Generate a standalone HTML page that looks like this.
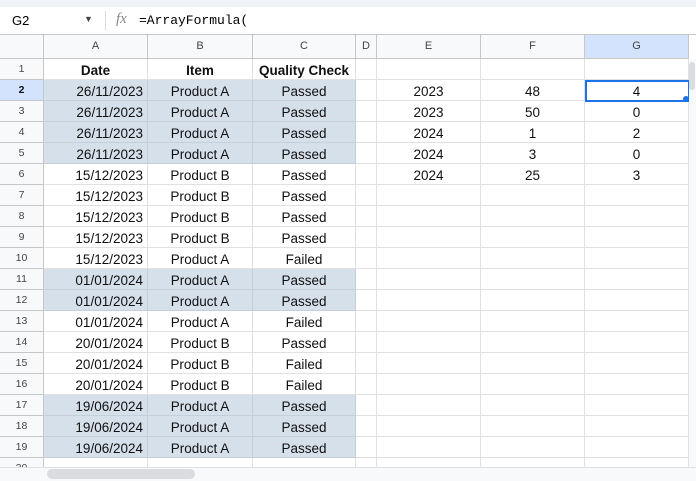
<!DOCTYPE html><html><head><style>
body{margin:0;width:696px;height:480px;overflow:hidden;background:#fff;font-family:"Liberation Sans",Arial,sans-serif;position:relative}
.top{position:absolute;left:0;top:0;width:696px;height:7px;background:#f0f4f9}
.fb{position:absolute;top:7px;left:0;width:696px;height:27px;background:#fff;border-bottom:1px solid #c7c7c7;font-size:13px}
.cell{position:absolute;box-sizing:border-box;border-right:1px solid #e1e1e1;border-bottom:1px solid #e1e1e1;font-size:13.5px;line-height:23px;color:#111;white-space:nowrap}
.hd{background:#f8f9fa;color:#444;font-size:11px;text-align:center;border-color:#c7c7c7}
</style></head><body>
<div class="top"></div>
<div class="fb"><span style="position:absolute;left:12px;top:6px">G2</span><span style="position:absolute;left:84px;top:7px;font-size:9px;color:#444">▼</span><div style="position:absolute;left:105px;top:4px;width:1px;height:19px;background:#ddd"></div><span style="position:absolute;left:116px;top:4px;font-family:'Liberation Serif',serif;font-style:italic;color:#888;font-size:15px">fx</span><span style="position:absolute;left:139px;top:6px;font-family:'Liberation Mono',monospace;font-size:13px">=ArrayFormula(</span></div>
<div id="g"></div>
<script>
const cols=[[0,44],[44,148],[148,253],[253,356],[356,377],[377,481],[481,585],[585,689]];
const names=['','A','B','C','D','E','F','G'];
let h='';
cols.forEach((c,i)=>{h+=`<div class="cell hd" style="left:${c[0]}px;top:35px;width:${c[1]-c[0]}px;height:24px;line-height:23px;${i==7?'background:#d3e3fd;':''}">${names[i]}</div>`});
const d=[['Date','Item','Quality Check'],
['26/11/2023','Product A','Passed',1],['26/11/2023','Product A','Passed',1],['26/11/2023','Product A','Passed',1],['26/11/2023','Product A','Passed',1],
['15/12/2023','Product B','Passed'],['15/12/2023','Product B','Passed'],['15/12/2023','Product B','Passed'],['15/12/2023','Product B','Passed'],['15/12/2023','Product A','Failed'],
['01/01/2024','Product A','Passed',1],['01/01/2024','Product A','Passed',1],['01/01/2024','Product A','Failed'],
['20/01/2024','Product B','Passed'],['20/01/2024','Product B','Failed'],['20/01/2024','Product B','Failed'],
['19/06/2024','Product A','Passed',1],['19/06/2024','Product A','Passed',1],['19/06/2024','Product A','Passed',1],['','','']];
const e=[['2023',48,4],['2023',50,0],['2024',1,2],['2024',3,0],['2024',25,3]];
d.forEach((r,k)=>{const y=59+k*21;const hi=r[3];
h+=`<div class="cell hd" style="left:0;top:${y}px;width:44px;height:21px;line-height:21px;font-size:10.5px;${k==1?'background:#d3e3fd;font-weight:bold;color:#111;':''}">${k+1}</div>`;
for(let i=1;i<8;i++){const c=cols[i];let t='',al='center',st='';
if(i<=3){t=r[i-1];if(i==1&&k>0){al='right';st='padding-right:4px;'}if(k==0)st+='font-weight:bold;';if(hi)st+='background:#d6e0eb;border-color:#c4cfdc;'}
if(i>=5&&k>=1&&k<=5)t=e[k-1][i-5];
h+=`<div class="cell" style="left:${c[0]}px;top:${y}px;width:${c[1]-c[0]}px;height:21px;text-align:${al};${st}">${t}</div>`}});
h+=`<div style="position:absolute;left:585px;top:80px;width:101px;height:18px;border:2px solid #1a73e8"></div><div style="position:absolute;left:683px;top:96px;width:6px;height:6px;border-radius:3px;background:#1a73e8"></div>`;
h+=`<div style="position:absolute;left:0;top:467px;width:696px;height:13px;background:#f8f9fa;border-top:1px solid #e1e1e1"></div><div style="position:absolute;left:47px;top:469px;width:148px;height:10px;border-radius:5px;background:#dadce0"></div>`;
h+=`<div style="position:absolute;left:689px;top:59px;width:7px;height:408px;background:#f8f9fa"></div><div style="position:absolute;left:689px;top:62px;width:6px;height:28px;border-radius:3px;background:#dadce0"></div>`;
document.getElementById('g').innerHTML=h;
</script>
</body></html>
